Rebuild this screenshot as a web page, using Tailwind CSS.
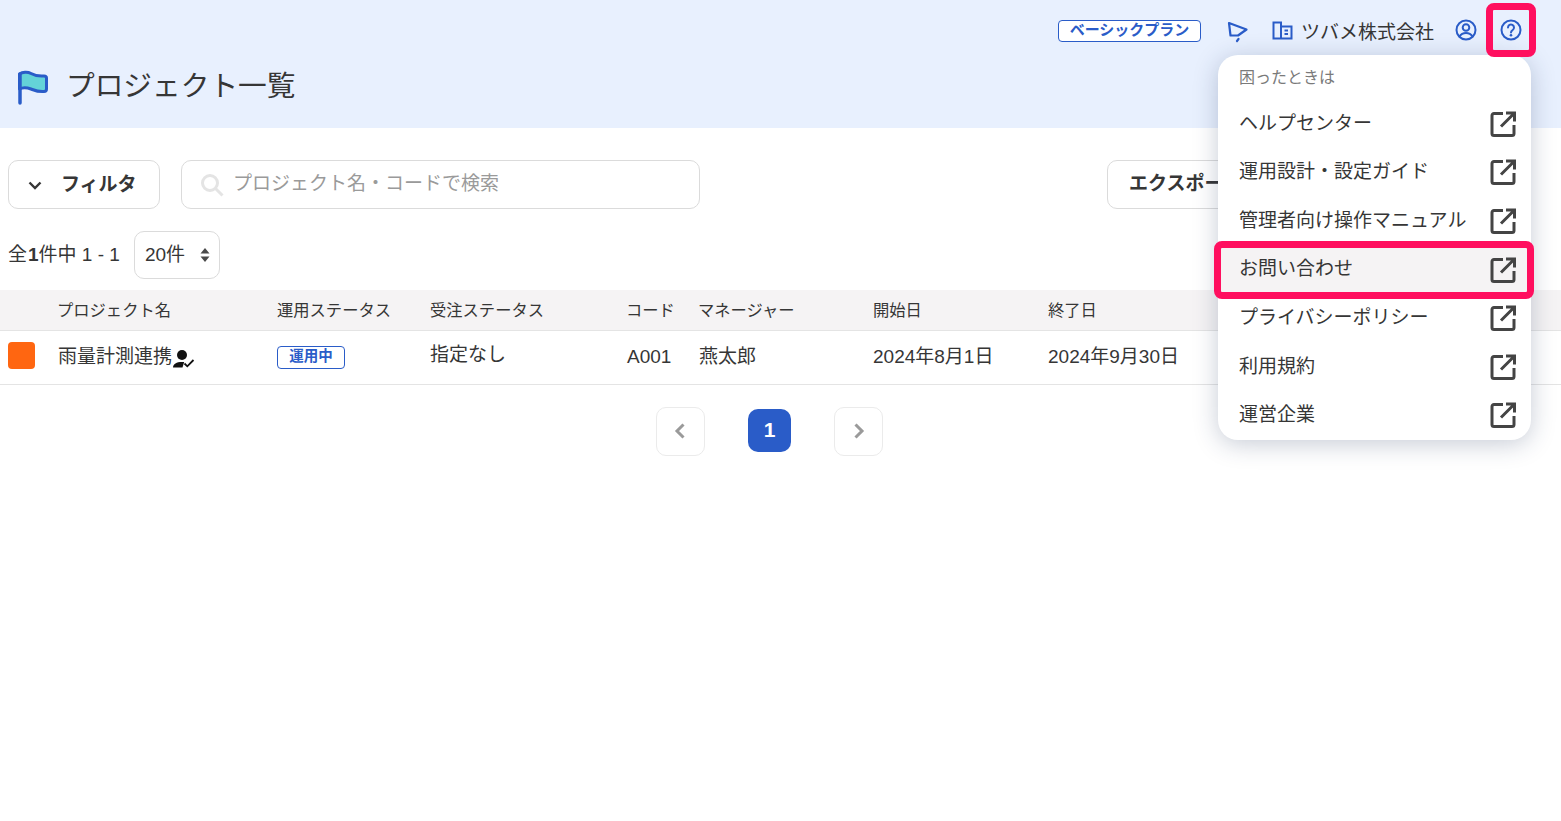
<!DOCTYPE html>
<html lang="ja">
<head>
  <meta charset="UTF-8" />
  <title>プロジェクト一覧</title>
  <script src="https://cdn.jsdelivr.net/npm/@tailwindcss/browser@4"></script>
</head>
<body class="relative h-[821px] overflow-hidden bg-white text-[#363636] font-['Liberation_Sans','Noto_Sans_CJK_JP',sans-serif]">

  <!-- header -->
  <header class="h-[128px] bg-[#e8f0fe]">
    <div class="flex h-[62px] items-center justify-end pr-[38px] pb-[1px]">
      <span class="flex h-[22px] w-[143px] items-center justify-center rounded-[4px] border border-[#2a5cc8] bg-white pb-[2px] text-[15px] leading-none font-bold text-[#2a5cc8]">ベーシックプラン</span>
      <svg class="ml-[24px]" width="24" height="24" viewBox="0 0 24 24" fill="none" stroke="#2a5cc8" stroke-width="2.200" stroke-linejoin="round"><path d="M4 4 21.500 10.500 13 16.500H5.500z"/><path d="M13.500 20 12 22" stroke-linecap="round"/></svg>
      <svg class="ml-[21px]" width="24" height="24" viewBox="0 0 24 24" fill="none" stroke="#2a5cc8" stroke-width="2"><path d="M3.500 3.500h7.500v16H3.500zM11 7.500h10.500v12H11z"/><path d="M14.500 11.500h3.500M14.500 15h3.500" stroke-width="1.800"/></svg>
      <span class="ml-[7px] translate-y-[2px] text-[19px] leading-none">ツバメ株式会社</span>
      <svg class="ml-[20px] -translate-y-px" width="24" height="24" viewBox="0 0 24 24" fill="none" stroke="#2a5cc8" stroke-width="2"><circle cx="12" cy="12" r="9.500"/><circle cx="12" cy="9.500" r="3.300"/><path d="M5.500 18.500c1.500-2.500 3.800-3.500 6.500-3.500s5 1 6.500 3.500"/></svg>
      <svg class="ml-[21px] -translate-y-px" width="24" height="24" viewBox="0 0 24 24" fill="none" stroke="#2a5cc8" stroke-width="2"><circle cx="12" cy="12" r="9.500"/><path d="M9 9.500a3 3 0 1 1 4.700 2.500c-1.100.8-1.700 1.300-1.700 2.500" stroke-linecap="round"/><circle cx="12" cy="17.300" r="1.300" fill="#2a5cc8" stroke="none"/></svg>
    </div>
    <div class="mt-[7px] flex items-center pl-[17px]">
      <svg width="32" height="36" viewBox="0 0 32 36"><path d="M2.500 5c3-2 8-2.500 11.500-.5s7 3 13 2.500c1.500 0 2.500 1 2.500 2v11c0 1.500-1 2.500-2.500 2.500-6 .5-9-1-13-2.500s-8-2-11.500 0z" fill="#64d3d8" stroke="#2a5cc8" stroke-width="3" stroke-linejoin="round"/><path d="M3 5v29" stroke="#2a5cc8" stroke-width="3.500" stroke-linecap="round"/></svg>
      <h1 class="ml-[17px] -translate-y-px text-[28.700px] leading-none font-normal">プロジェクト一覧</h1>
    </div>
  </header>

  <!-- toolbar -->
  <div class="mt-[32px] flex px-[8px]">
    <button class="flex h-[49px] w-[152px] items-center rounded-[10px] border border-[#dbdbdb] pl-[18px] text-[19px] font-bold">
      <svg width="16" height="16" viewBox="0 0 16 16" fill="none" stroke="#363636" stroke-width="2.400"><path d="m2.500 5.500 5.500 5.500 5.500-5.500"/></svg>
      <span class="ml-[18px] translate-y-px">フィルタ</span>
    </button>
    <div class="ml-[21px] flex h-[49px] w-[519px] items-center rounded-[10px] border border-[#dbdbdb] pl-[18px]">
      <svg width="24" height="24" viewBox="0 0 24 24" fill="none" stroke="#e4e4e4" stroke-width="3"><circle cx="10" cy="10" r="7.500"/><path d="m15.500 15.500 7 7"/></svg>
      <span class="ml-[9px] text-[19px] text-[#9a9a9a]">プロジェクト名・コードで検索</span>
    </div>
    <button class="ml-[407px] h-[49px] w-[200px] rounded-[10px] border border-[#dbdbdb] pl-[21px] text-left text-[19px] font-bold whitespace-nowrap">エクスポート</button>
  </div>

  <!-- count -->
  <div class="mt-[22px] flex items-center pl-[8px] text-[19px]">
    <span><span>全</span><b class="ml-px">1</b><span>件中 1 - 1</span></span>
    <div class="ml-[14px] flex h-[48px] w-[86px] items-center justify-between rounded-[10px] border border-[#dbdbdb] pr-[9px] pl-[10px]">
      <span>20件</span>
      <svg width="10" height="16" viewBox="0 0 10 16" fill="#4a4a4a"><path d="M5 1 9.500 6.500H.5zM5 15 .5 9.500h9z"/></svg>
    </div>
  </div>

  <!-- table -->
  <table class="mt-[11px] w-full table-fixed border-collapse text-left">
    <colgroup>
      <col class="w-[57px]" /><col class="w-[220px]" /><col class="w-[153px]" /><col class="w-[197px]" /><col class="w-[72px]" /><col class="w-[174px]" /><col class="w-[175px]" /><col />
    </colgroup>
    <thead>
      <tr class="h-[40px] border-b border-[#e4e4e4] bg-[#f5f3f4] text-[16.300px]">
        <th></th><th class="font-normal">プロジェクト名</th><th class="font-normal">運用ステータス</th><th class="font-normal">受注ステータス</th><th class="font-normal -translate-x-px">コード</th><th class="font-normal -translate-x-px">マネージャー</th><th class="font-normal">開始日</th><th class="font-normal">終了日</th>
      </tr>
    </thead>
    <tbody>
      <tr class="h-[54px] border-b border-[#e4e4e4] text-[19px]">
        <td class="pb-[4px] pl-[8px]"><div class="size-[27px] rounded-[4px] bg-[#ff6611]"></div></td>
        <td>
          <div class="flex items-center pl-px">雨量計測連携
            <svg class="ml-[1px] mt-[3px]" width="22" height="18" viewBox="0 0 22 18" fill="#111"><circle cx="9" cy="5" r="5"/><path d="M0 17.500c0-3.500 3.500-5.500 9-5.500.8 0 1.500 0 2.200.1l-1.700 5.400z"/><path d="m11.500 13.500 2.800 2.800 6.200-6.300" fill="none" stroke="#111" stroke-width="1.800"/></svg>
          </div>
        </td>
        <td><span class="flex h-[23px] w-[68px] items-center justify-center rounded-[4px] border border-[#2a5cc8] text-[14.500px] font-bold text-[#2a5cc8]">運用中</span></td>
        <td class="pb-[4px]">指定なし</td>
        <td>A001</td>
        <td>燕太郎</td>
        <td>2024年8月1日</td>
        <td>2024年9月30日</td>
      </tr>
    </tbody>
  </table>

  <!-- pagination -->
  <div class="mt-[22px] flex pl-[656px]">
    <button class="flex size-[49px] items-center justify-center rounded-[10px] border border-[#ebebeb] pr-[2px]">
      <svg width="14" height="18" viewBox="0 0 14 18" fill="none" stroke="#9a9a9a" stroke-width="3"><path d="M10.500 2.500 4 9l6.500 6.500"/></svg>
    </button>
    <button class="mt-[2px] ml-[43px] size-[43px] rounded-[10px] bg-[#2a5cc8] text-[21px] font-bold text-white">1</button>
    <button class="ml-[43px] flex size-[49px] items-center justify-center rounded-[10px] border border-[#ebebeb]">
      <svg width="14" height="18" viewBox="0 0 14 18" fill="none" stroke="#9a9a9a" stroke-width="3"><path d="M3.500 2.500 10 9l-6.500 6.500"/></svg>
    </button>
  </div>

  <!-- help menu -->
  <div class="absolute top-[55px] left-[1218px] flex h-[385px] w-[313px] flex-col rounded-[20px] bg-white pt-[9px] shadow-[0_4px_24px_rgba(30,50,90,0.25)]">
    <p class="h-[35.500px] pl-[21px] text-[16px] leading-[27px] text-[#7a7a7a]">困ったときは</p>
    <a class="flex h-[48.600px] items-center justify-between pr-[14px] pl-[21px] text-[19px]">ヘルプセンター<svg width="28" height="28" viewBox="0 0 28 28" fill="none" stroke="#444" stroke-width="3"><path d="M14 3.500H5a2 2 0 0 0-2 2v18a2 2 0 0 0 2 2h18a2 2 0 0 0 2-2V15"/><path d="M17 3h8.500v8.500M25 3.500 12 16.500"/></svg></a>
    <a class="flex h-[48.600px] items-center justify-between pr-[14px] pl-[21px] text-[19px]">運用設計・設定ガイド<svg width="28" height="28" viewBox="0 0 28 28" fill="none" stroke="#444" stroke-width="3"><path d="M14 3.500H5a2 2 0 0 0-2 2v18a2 2 0 0 0 2 2h18a2 2 0 0 0 2-2V15"/><path d="M17 3h8.500v8.500M25 3.500 12 16.500"/></svg></a>
    <a class="flex h-[48.600px] items-center justify-between pr-[14px] pl-[21px] text-[19px]">管理者向け操作マニュアル<svg width="28" height="28" viewBox="0 0 28 28" fill="none" stroke="#444" stroke-width="3"><path d="M14 3.500H5a2 2 0 0 0-2 2v18a2 2 0 0 0 2 2h18a2 2 0 0 0 2-2V15"/><path d="M17 3h8.500v8.500M25 3.500 12 16.500"/></svg></a>
    <a class="flex h-[48.600px] items-center justify-between bg-[#f5f3f4] pr-[14px] pl-[21px] text-[19px]">お問い合わせ<svg width="28" height="28" viewBox="0 0 28 28" fill="none" stroke="#444" stroke-width="3"><path d="M14 3.500H5a2 2 0 0 0-2 2v18a2 2 0 0 0 2 2h18a2 2 0 0 0 2-2V15"/><path d="M17 3h8.500v8.500M25 3.500 12 16.500"/></svg></a>
    <a class="flex h-[48.600px] items-center justify-between pr-[14px] pl-[21px] text-[19px]">プライバシーポリシー<svg width="28" height="28" viewBox="0 0 28 28" fill="none" stroke="#444" stroke-width="3"><path d="M14 3.500H5a2 2 0 0 0-2 2v18a2 2 0 0 0 2 2h18a2 2 0 0 0 2-2V15"/><path d="M17 3h8.500v8.500M25 3.500 12 16.500"/></svg></a>
    <a class="flex h-[48.600px] items-center justify-between pr-[14px] pl-[21px] text-[19px]">利用規約<svg width="28" height="28" viewBox="0 0 28 28" fill="none" stroke="#444" stroke-width="3"><path d="M14 3.500H5a2 2 0 0 0-2 2v18a2 2 0 0 0 2 2h18a2 2 0 0 0 2-2V15"/><path d="M17 3h8.500v8.500M25 3.500 12 16.500"/></svg></a>
    <a class="flex h-[48.600px] items-center justify-between pr-[14px] pl-[21px] text-[19px]">運営企業<svg width="28" height="28" viewBox="0 0 28 28" fill="none" stroke="#444" stroke-width="3"><path d="M14 3.500H5a2 2 0 0 0-2 2v18a2 2 0 0 0 2 2h18a2 2 0 0 0 2-2V15"/><path d="M17 3h8.500v8.500M25 3.500 12 16.500"/></svg></a>
  </div>

  <!-- annotation frames -->
  <div class="absolute top-[3px] left-[1486px] h-[54px] w-[50px] rounded-[8px] border-[7px] border-[#ff0f5f]"></div>
  <div class="absolute top-[241px] left-[1214px] h-[58px] w-[320px] rounded-[8px] border-[7px] border-[#ff0f5f]"></div>
</body>
</html>
